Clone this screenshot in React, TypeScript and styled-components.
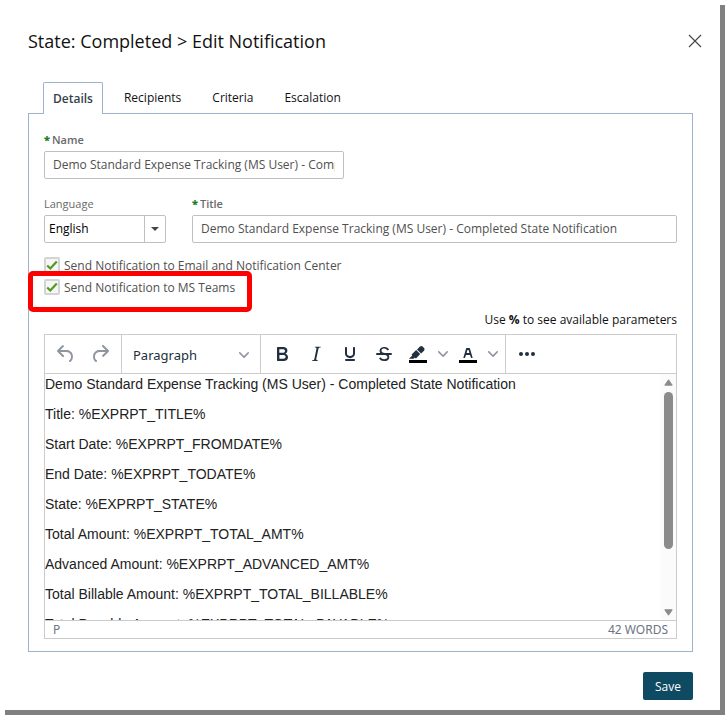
import React from "react";
import styled, { createGlobalStyle, css } from "styled-components";

const GlobalStyle = createGlobalStyle`
  *, *::before, *::after { box-sizing: border-box; }
  body { margin: 0; background: #fff; }
  body, button, input, select { font-family: "Open Sans", "Noto Sans", sans-serif; font-size: 12px; }
`;

const Dialog = styled.main`
  display: flex;
  flex-direction: column;
  min-height: calc(100vh - 5px);
  margin: 0 5px 5px 0;
  padding: 26px 27px 10px 28px;
  background: #fff;
  box-shadow: 5px 5px 0 #808080;
  color: #111;
`;

const Header = styled.header`
  display: flex;
  align-items: center;
  justify-content: space-between;
  height: 30px;
  margin-right: -12px;
`;

const Heading = styled.h1`
  margin: 0;
  font-size: 18px;
  line-height: 30px;
  font-weight: 400;
`;

const CloseButton = styled.button`
  display: grid;
  place-items: center;
  width: 20px;
  height: 20px;
  padding: 0;
  border: 0;
  background: none;
`;

const TabList = styled.div`
  display: flex;
  gap: 11px;
  margin: 26px 0 -1px 15px;
`;

const Tab = styled.button<{ $active?: boolean }>`
  height: 32px;
  padding: 0 9px 2px;
  border: 1px solid transparent;
  border-bottom: 0;
  border-radius: 2px 2px 0 0;
  background: none;
  color: #111;
  ${(p) =>
    p.$active &&
    css`
      z-index: 1;
      padding-bottom: 0;
      border-color: #9db3cd;
      background: #fff;
      color: #34424d;
      font-weight: 600;
    `}
`;

const Panel = styled.section`
  display: flex;
  flex-direction: column;
  flex: 1;
  padding: 18px 15px 12px;
  border: 1px solid #9db3cd;
`;

const Fields = styled.div`
  display: flex;
  flex-direction: column;
  gap: 17px;
  margin-bottom: 11px;
`;

const FieldRow = styled.div`
  display: flex;
  gap: 26px;
`;

const Field = styled.div<{ $width?: number }>`
  display: flex;
  flex-direction: column;
  gap: 3px;
  ${(p) => (p.$width ? `flex: 0 0 ${p.$width}px;` : "flex: 1;")}
`;

const Label = styled.label<{ $required?: boolean }>`
  color: #6a6a6a;
  font-size: 11px;
  line-height: 16px;
  font-weight: ${(p) => (p.$required ? 600 : 400)};
`;

const Star = styled.span`
  margin-right: 2px;
  color: #1c7a2e;
  font-weight: 800;
`;

const TextInput = styled.input`
  width: 100%;
  height: 28px;
  padding: 0 8px 1px;
  border: 1px solid #c0c0c0;
  border-radius: 2px;
  background: #fff;
  color: #505050;
`;

const SelectBox = styled.div`
  display: grid;
  grid-template-columns: 1fr 22px;
  height: 28px;
`;

const Select = styled.select`
  grid-area: 1 / 1 / 2 / 3;
  appearance: none;
  padding: 0 4px 1px;
  border: 1px solid #c0c0c0;
  border-radius: 2px;
  background: #fff;
  color: #000;
`;

const SelectArrow = styled.span`
  grid-area: 1 / 2 / 2 / 3;
  display: grid;
  place-items: center;
  margin-right: 1px;
  border-left: 1px solid #c0c0c0;
  pointer-events: none;
`;

const CheckRow = styled.div`
  position: relative;
  display: flex;
  align-items: center;
  gap: 4px;
  height: 22px;
  color: #505050;
`;

const CheckMark = styled.span`
  display: grid;
  place-items: center;
  width: 16px;
  height: 16px;

  input,
  svg {
    grid-area: 1 / 1;
  }
  input {
    appearance: none;
    width: 16px;
    height: 16px;
    margin: 0;
    border: 2px solid #d4d4d4;
    border-radius: 2px;
    background: #f6f6f6;
  }
  svg {
    pointer-events: none;
  }
`;

const Highlight = styled.span`
  position: absolute;
  inset: -5px auto auto -16px;
  width: 224px;
  height: 41px;
  border: 5px solid #fe0000;
  border-radius: 5px;
  pointer-events: none;
`;

const Hint = styled.p`
  margin: 13px 0 5px;
  line-height: 18px;
  text-align: right;

  b {
    font-weight: 700;
  }
`;

const Editor = styled.div`
  display: flex;
  flex-direction: column;
  flex: 1;
  border: 1px solid #ccc;
`;

const Toolbar = styled.div`
  display: flex;
  height: 39px;
  border-bottom: 1px solid #ccc;
`;

const ToolGroup = styled.div`
  display: flex;
  align-items: center;
  padding: 0 4px;
  border-right: 1px solid #ccc;

  &:last-child {
    border-right: 0;
  }
`;

const ToolButton = styled.button<{ $muted?: boolean; $narrow?: boolean }>`
  display: grid;
  place-items: center;
  width: ${(p) => (p.$narrow ? 16 : 34)}px;
  height: 34px;
  padding: 0;
  border: 0;
  background: none;
  color: ${(p) => (p.$muted ? "#9096a0" : "#222f3e")};
`;

const FormatButton = styled.button`
  display: flex;
  align-items: center;
  justify-content: space-between;
  width: 130px;
  height: 34px;
  padding: 1px 7px 0;
  border: 0;
  background: none;
  color: #222f3e;
  font-family: "Noto Sans", sans-serif;
  font-size: 13px;

  svg {
    color: #9096a0;
  }
`;

const EditArea = styled.div`
  display: flex;
  flex: 1 0 246px;
  height: 246px;
  overflow: hidden;
`;

const Content = styled.div`
  flex: 1;
  overflow: hidden;
  padding-top: 2px;
  color: #222;
  font-family: "Liberation Sans", Arial, sans-serif;
  font-size: 14px;
  line-height: 16px;

  p {
    margin: 0 0 14px;
  }
`;

const ScrollTrack = styled.div`
  display: flex;
  flex-direction: column;
  align-items: center;
  width: 15px;
  padding: 5px 0 4px;
  background: #fbfbfb;
`;

const ScrollThumb = styled.div`
  flex: 0 0 157px;
  width: 9px;
  margin: 6px 0 auto;
  border-radius: 5px;
  background: #8b8b8b;
`;

const StatusBar = styled.div`
  display: flex;
  justify-content: space-between;
  height: 18px;
  padding: 0 8px;
  border-top: 1px solid #ccc;
  color: #6c7580;
  font-family: "Noto Sans", sans-serif;
  line-height: 18px;
`;

const Footer = styled.footer`
  display: flex;
  justify-content: flex-end;
  padding-top: 20px;
`;

const SaveButton = styled.button`
  height: 28px;
  padding: 0 12px;
  border: 0;
  border-radius: 2px;
  background: #0e4a62;
  color: #fff;
`;

const icons = {
  undo: "M6.4 8H12c3.7 0 6.2 2 6.8 5.1.6 2.7-.4 5.6-2.3 6.8a1 1 0 0 1-1-1.8c1.1-.6 1.8-2.7 1.4-4.6-.5-2.1-2.1-3.5-4.9-3.5H6.4l3.3 3.3a1 1 0 1 1-1.4 1.4l-5-5a1 1 0 0 1 0-1.4l5-5a1 1 0 0 1 1.4 1.4L6.4 8z",
  redo: "M17.6 10H12c-2.8 0-4.4 1.4-4.9 3.5-.4 2 .3 4 1.4 4.6a1 1 0 1 1-1 1.8c-2-1.2-2.9-4.1-2.3-6.8.6-3 3-5.1 6.8-5.1h5.6l-3.3-3.3a1 1 0 1 1 1.4-1.4l5 5a1 1 0 0 1 0 1.4l-5 5a1 1 0 0 1-1.4-1.4l3.3-3.3z",
  bold: "M7.8 19c-.3 0-.5 0-.6-.2l-.2-.5V5.7c0-.2 0-.4.2-.5l.6-.2h5c1.5 0 2.7.3 3.5 1 .7.6 1.1 1.4 1.1 2.5a3 3 0 0 1-.6 1.9c-.4.6-1 1-1.6 1.2.4.1.9.3 1.3.6s.8.7 1 1.2c.4.4.5 1 .5 1.6 0 1.3-.4 2.3-1.3 3-.8.7-2.1 1-3.8 1H7.8zm5-8.3c.6 0 1.2-.1 1.6-.5.4-.3.6-.7.6-1.3 0-1.1-.8-1.7-2.3-1.7H9.3v3.5h3.4zm.5 6c.7 0 1.3-.1 1.7-.4.4-.4.6-.9.6-1.5s-.2-1-.7-1.4c-.4-.3-1-.4-2-.4H9.4v3.8h4z",
  italic: "M16.7 4.7l-.1.9h-.3c-.6 0-1 0-1.4.3-.3.3-.4.6-.5 1.1l-2.1 9.8v.6c0 .5.4.8 1.4.8h.2l-.2.8H8l.2-.8h.2c1.1 0 1.8-.5 2-1.5l2-9.8.1-.5c0-.6-.4-.8-1.4-.8h-.3l.2-.9h5.8z",
  underline:
    "M16 5c.6 0 1 .4 1 1v5.5a4 4 0 0 1-.4 1.8l-1 1.4a5.3 5.3 0 0 1-5.5 1 5 5 0 0 1-1.6-1c-.5-.4-.8-.9-1.1-1.4a4 4 0 0 1-.4-1.8V6c0-.6.4-1 1-1s1 .4 1 1v5.5c0 .3 0 .6.2 1l.6.7a3.3 3.3 0 0 0 2.2.8 3.4 3.4 0 0 0 2.2-.8c.3-.2.4-.5.6-.8l.2-.9V6c0-.6.4-1 1-1zM8 17h8c.6 0 1 .4 1 1s-.4 1-1 1H8a1 1 0 0 1 0-2z",
  strike:
    "M15.6 8.5c-.5-.7-1-1.1-1.3-1.3-.6-.4-1.3-.6-2-.6-2.7 0-2.8 1.7-2.8 2.1 0 1.6 1.8 2 3.2 2.3 4.4.9 4.6 2.8 4.6 3.9 0 1.4-.7 4.1-5 4.1A6.2 6.2 0 0 1 7 16.4l1.5-1.1c.4.6 1.6 2 3.7 2 1.6 0 2.5-.4 3-1.2.4-.8.3-2-.8-2.6-.7-.4-1.6-.7-2.9-1-1-.2-3.9-.8-3.9-3.6C7.6 6 10.3 5 12.4 5c2.9 0 4.2 1.6 4.7 2.4l-1.5 1.1zM5 11h14a1 1 0 0 1 0 2H5a1 1 0 0 1 0-2z",
  marker:
    "M7.7 16.7H3l3.3-3.3-.7-.8L10.2 8l4 4.1-4 4.2c-.2.2-.6.2-.8 0l-.6-.7-1.1 1.1zm5-7.5L11 7.4l3-2.9a2 2 0 0 1 2.6 0L18 6c.7.7.7 2 0 2.7l-2.9 2.9-1.8-1.8-.5-.6",
  textColor:
    "M8.7 16h-.8a.5.5 0 0 1-.5-.6l2.7-9c.1-.3.3-.4.5-.4h2.8c.2 0 .4.1.5.4l2.7 9a.5.5 0 0 1-.5.6h-.8a.5.5 0 0 1-.4-.4l-.7-2.2c0-.3-.3-.4-.5-.4h-3.4c-.2 0-.4.1-.5.4l-.7 2.2c0 .3-.2.4-.4.4zm2.6-7.6l-.6 2a.5.5 0 0 0 .5.6h1.6a.5.5 0 0 0 .5-.6l-.6-2c0-.3-.3-.4-.5-.4h-.4c-.2 0-.4.1-.5.4z",
  more: "M6 10a2 2 0 0 0-2 2c0 1.1.9 2 2 2a2 2 0 0 0 2-2 2 2 0 0 0-2-2zm12 0a2 2 0 0 0-2 2c0 1.1.9 2 2 2a2 2 0 0 0 2-2 2 2 0 0 0-2-2zm-6 0a2 2 0 0 0-2 2c0 1.1.9 2 2 2a2 2 0 0 0 2-2 2 2 0 0 0-2-2z",
};

function ToolIcon({ name, swatch }: { name: keyof typeof icons; swatch?: boolean }) {
  return (
    <svg width="24" height="24" viewBox="0 0 24 24" fill="currentColor" fillRule="evenodd" aria-hidden="true">
      {swatch && <path d="M3 18h18v3H3z" fill="#000" />}
      <path d={icons[name]} fillRule={name === "strike" ? "nonzero" : "evenodd"} />
    </svg>
  );
}

function Chevron() {
  return (
    <svg width="10" height="10" viewBox="0 0 10 10" fill="currentColor" aria-hidden="true">
      <path d="M8.7 2.2c.3-.3.8-.3 1 0 .4.4.4.9 0 1.2L5.7 7.8c-.3.3-.9.3-1.2 0L.2 3.4a.8.8 0 0 1 0-1.2c.3-.3.8-.3 1.1 0L5 6l3.7-3.8z" />
    </svg>
  );
}

function CheckOption({ id, label, highlighted }: { id: string; label: string; highlighted?: boolean }) {
  return (
    <CheckRow>
      <CheckMark>
        <input type="checkbox" id={id} defaultChecked />
        <svg width="12" height="12" viewBox="0 0 12 12" aria-hidden="true">
          <path d="M1.2 6.5L4.3 9.5L10.8 2.5" fill="none" stroke="#4f9a1c" strokeWidth="2.2" />
        </svg>
      </CheckMark>
      <label htmlFor={id}>{label}</label>
      {highlighted && <Highlight />}
    </CheckRow>
  );
}

const TABS = ["Details", "Recipients", "Criteria", "Escalation"];

const MESSAGE = [
  "Demo Standard Expense Tracking (MS User) - Completed State Notification",
  "Title: %EXPRPT_TITLE%",
  "Start Date: %EXPRPT_FROMDATE%",
  "End Date: %EXPRPT_TODATE%",
  "State: %EXPRPT_STATE%",
  "Total Amount: %EXPRPT_TOTAL_AMT%",
  "Advanced Amount: %EXPRPT_ADVANCED_AMT%",
  "Total Billable Amount: %EXPRPT_TOTAL_BILLABLE%",
  "Total Payable Amount: %EXPRPT_TOTAL_PAYABLE%",
];

export default function App() {
  return (
    <>
      <GlobalStyle />
      <Dialog>
        <Header>
          <Heading>State: Completed &gt; Edit Notification</Heading>
          <CloseButton aria-label="Close">
            <svg width="14" height="14" viewBox="0 0 14 14" aria-hidden="true">
              <path d="M1 1L13 13M13 1L1 13" stroke="#444" strokeWidth="1.1" />
            </svg>
          </CloseButton>
        </Header>
        <TabList role="tablist">
          {TABS.map((tab, i) => (
            <Tab key={tab} role="tab" aria-selected={i === 0} $active={i === 0}>
              {tab}
            </Tab>
          ))}
        </TabList>
        <Panel>
          <Fields>
            <FieldRow>
              <Field $width={300}>
                <Label htmlFor="name" $required>
                  <Star>*</Star>Name
                </Label>
                <TextInput
                  id="name"
                  defaultValue="Demo Standard Expense Tracking (MS User) - Completed State Notification"
                />
              </Field>
            </FieldRow>
            <FieldRow>
              <Field $width={122}>
                <Label htmlFor="language">Language</Label>
                <SelectBox>
                  <Select id="language" defaultValue="English">
                    <option>English</option>
                  </Select>
                  <SelectArrow>
                    <svg width="8" height="4" viewBox="0 0 8 4" aria-hidden="true">
                      <path d="M0 0h8L4 4z" fill="#444" />
                    </svg>
                  </SelectArrow>
                </SelectBox>
              </Field>
              <Field>
                <Label htmlFor="title" $required>
                  <Star>*</Star>Title
                </Label>
                <TextInput
                  id="title"
                  defaultValue="Demo Standard Expense Tracking (MS User) - Completed State Notification"
                />
              </Field>
            </FieldRow>
          </Fields>
          <CheckOption id="email" label="Send Notification to Email and Notification Center" />
          <CheckOption id="teams" label="Send Notification to MS Teams" highlighted />
          <Hint>
            Use <b>%</b> to see available parameters
          </Hint>
          <Editor>
            <Toolbar role="toolbar">
              <ToolGroup>
                <ToolButton aria-label="Undo" $muted>
                  <ToolIcon name="undo" />
                </ToolButton>
                <ToolButton aria-label="Redo" $muted>
                  <ToolIcon name="redo" />
                </ToolButton>
              </ToolGroup>
              <ToolGroup>
                <FormatButton>
                  Paragraph
                  <Chevron />
                </FormatButton>
              </ToolGroup>
              <ToolGroup>
                <ToolButton aria-label="Bold">
                  <ToolIcon name="bold" />
                </ToolButton>
                <ToolButton aria-label="Italic">
                  <ToolIcon name="italic" />
                </ToolButton>
                <ToolButton aria-label="Underline">
                  <ToolIcon name="underline" />
                </ToolButton>
                <ToolButton aria-label="Strikethrough">
                  <ToolIcon name="strike" />
                </ToolButton>
                <ToolButton aria-label="Background color">
                  <ToolIcon name="marker" swatch />
                </ToolButton>
                <ToolButton aria-label="Background color menu" $muted $narrow>
                  <Chevron />
                </ToolButton>
                <ToolButton aria-label="Text color">
                  <ToolIcon name="textColor" swatch />
                </ToolButton>
                <ToolButton aria-label="Text color menu" $muted $narrow>
                  <Chevron />
                </ToolButton>
              </ToolGroup>
              <ToolGroup>
                <ToolButton aria-label="More">
                  <ToolIcon name="more" />
                </ToolButton>
              </ToolGroup>
            </Toolbar>
            <EditArea>
              <Content contentEditable suppressContentEditableWarning role="textbox" aria-label="Message">
                {MESSAGE.map((line) => (
                  <p key={line}>{line}</p>
                ))}
              </Content>
              <ScrollTrack aria-hidden="true">
                <svg width="9" height="7" viewBox="0 0 9 7">
                  <path d="M4.5 0.8L8.2 6.2H0.8z" fill="#8b8b8b" stroke="#8b8b8b" strokeLinejoin="round" />
                </svg>
                <ScrollThumb />
                <svg width="9" height="7" viewBox="0 0 9 7">
                  <path d="M4.5 6.2L8.2 0.8H0.8z" fill="#8b8b8b" stroke="#8b8b8b" strokeLinejoin="round" />
                </svg>
              </ScrollTrack>
            </EditArea>
            <StatusBar>
              <span>P</span>
              <span>42 WORDS</span>
            </StatusBar>
          </Editor>
        </Panel>
        <Footer>
          <SaveButton>Save</SaveButton>
        </Footer>
      </Dialog>
    </>
  );
}
